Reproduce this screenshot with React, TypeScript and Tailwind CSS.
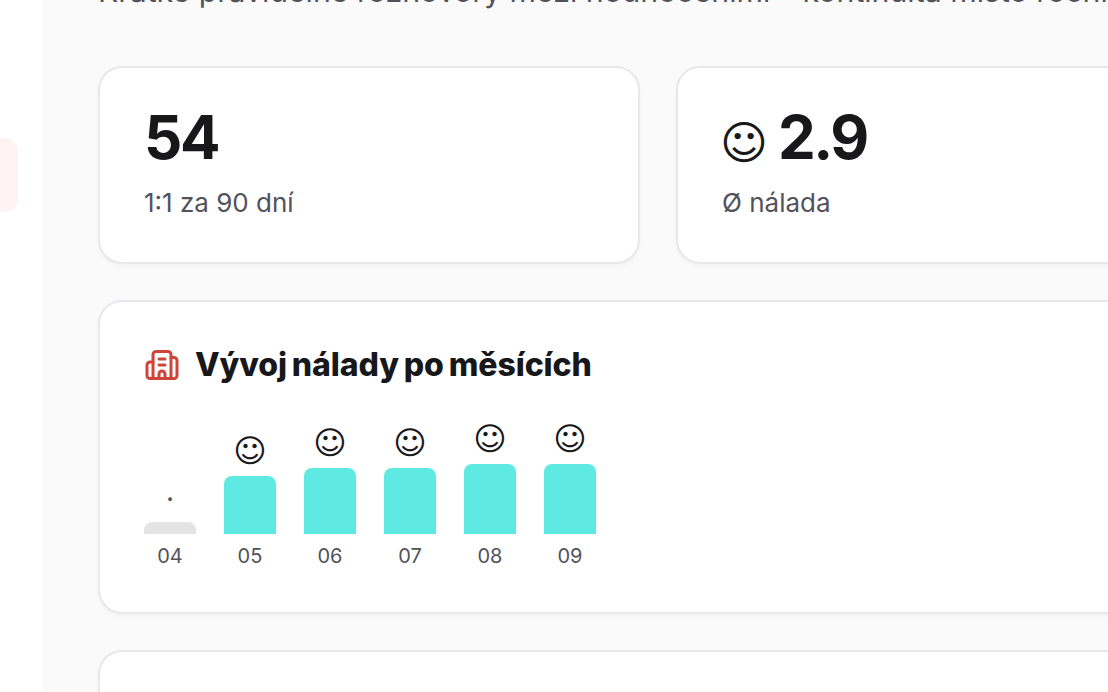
import { Building2 } from 'lucide-react'

const mesice = [
  { label: '04', h: 12, emoji: '·', empty: true },
  { label: '05', h: 58, emoji: '☺' },
  { label: '06', h: 66, emoji: '☺' },
  { label: '07', h: 66, emoji: '☺' },
  { label: '08', h: 70, emoji: '☺' },
  { label: '09', h: 70, emoji: '☺' },
]

const card = 'rounded-[24px] border-2 border-[#e8e8ec] bg-white shadow-[0_2px_4px_rgba(0,0,0,0.03)]'

function Stat({ value, label, smile }: { value: string; label: string; smile?: boolean }) {
  return (
    <div className={`${card} h-[198px] w-[542px] shrink-0 pl-[44px] pt-[30px]`}>
      <div className="flex h-[77px] items-center text-[60px] font-bold leading-[76px] tracking-[-0.04em] text-[#18181b]">
        {smile && <span className="ml-[-2px] mr-[10px] mt-[12px] font-['DejaVu_Sans'] text-[46px] font-normal tracking-normal">☺</span>}
        {value}
      </div>
      <div className="mt-[10px] text-[26px] leading-[36px] text-[#52525b]">{label}</div>
    </div>
  )
}

export default function App() {
  return (
    <div className="flex h-[692px] w-[1108px] overflow-hidden bg-white font-['Inter',sans-serif]">
      <aside className="w-[42px] shrink-0 pt-[138px]">
        <div className="ml-[-20px] h-[74px] w-[38px] rounded-[14px] bg-[#fef2f2]" />
      </aside>
      <main className="min-w-0 flex-1 overflow-hidden bg-[#fafafa] pl-[56px]">
        <p className="mt-[-29px] h-[40px] whitespace-nowrap text-[30.25px] leading-[40px] text-[#52525b]">
          Krátké pravidelné rozhovory mezi hodnoceními – kontinuita místo ročních překvapení.
        </p>
        <div className="mt-[55px] flex gap-[36px]">
          <Stat value="54" label="1:1 za 90 dní" />
          <Stat value="2.9" label="Ø nálada" smile />
        </div>
        <section className={`${card} mt-[36px] h-[314px] w-[1120px] pl-[44px] pt-[39px]`}>
          <h3 className="flex items-center gap-[15px] text-[32px] font-extrabold leading-[48px] tracking-[-0.003em] [word-spacing:-2px] text-[#18181b]">
            <Building2 size={36} strokeWidth={2} className="text-[#d0453a]" />
            Vývoj nálady po měsících
          </h3>
          <div className="mt-[21px] flex h-[160px] items-end gap-[28px]">
            {mesice.map((m) => (
              <div key={m.label} className="flex w-[52px] flex-col items-center">
                <span className={m.empty ? 'mb-[5px] text-[28px] leading-[36px] text-[#52525b]' : "mb-[3px] font-['DejaVu_Sans'] text-[32px] leading-[44px] text-[#18181b]"}>
                  {m.emoji}
                </span>
                <div
                  className={m.empty ? 'w-full rounded-t-[8px] bg-[#e4e4e7]' : 'w-full rounded-t-[8px] bg-[#5eeae2]'}
                  style={{ height: m.h }}
                />
                <span className="mt-[8px] text-[20px] leading-[28px] text-[#52525b]">{m.label}</span>
              </div>
            ))}
          </div>
        </section>
        <section className={`${card} mt-[36px] h-[300px] w-[1120px]`} />
      </main>
    </div>
  )
}
